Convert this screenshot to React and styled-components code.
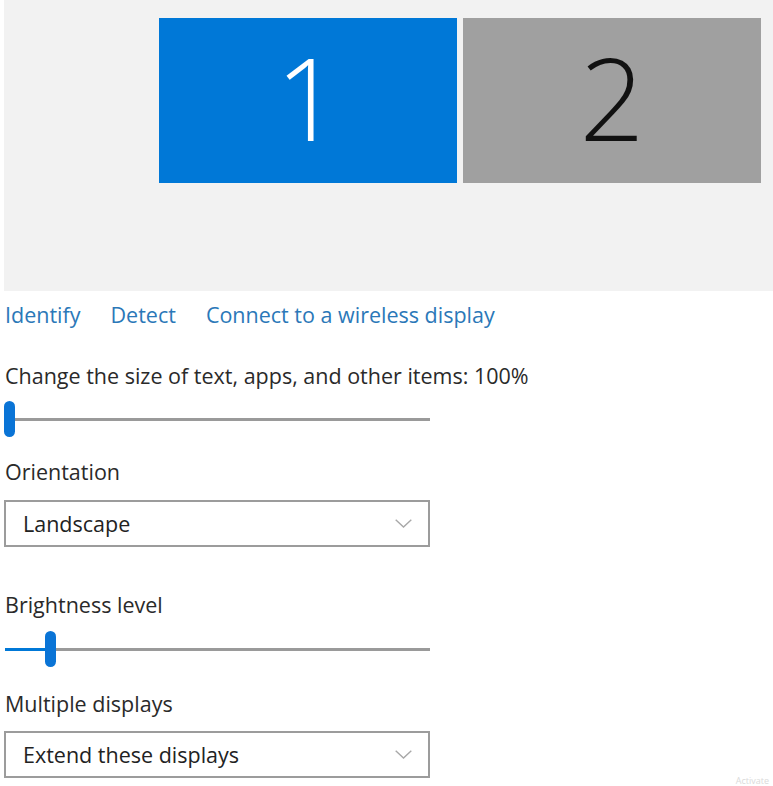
import React from 'react';
import styled, { createGlobalStyle } from 'styled-components';

const Global = createGlobalStyle`
  body {
    margin: 0;
    background: #ffffff;
    font-family: "Open Sans", "Noto Sans", sans-serif;
    color: #222;
  }
`;

const Page = styled.div`
  width: 773px;
  height: 786px;
  padding-left: 4px;
  box-sizing: border-box;
  overflow: hidden;
  position: relative;
`;

const Arrangement = styled.div`
  height: 291px;
  background: #f2f2f2;
  padding: 18px 8px 0 155px;
  box-sizing: border-box;
  display: flex;
  gap: 6px;
  align-items: flex-start;
`;

const Monitor = styled.div`
  width: 298px;
  height: 165px;
  background: ${p => (p.active ? '#0078d7' : '#a0a0a0')};
  color: ${p => (p.active ? '#ffffff' : '#111111')};
  display: flex;
  align-items: center;
  justify-content: center;
  font-family: "Open Sans", sans-serif;
  font-weight: 300;
  font-size: 114px;
  line-height: 1;
  padding-bottom: 8px;
  box-sizing: border-box;
`;

const Links = styled.div`
  display: flex;
  gap: 30px;
  margin-top: 9px;
  padding-left: 1px;
`;

const Link = styled.a`
  color: #2b78b8;
  font-size: 21.5px;
  line-height: 30px;
  cursor: pointer;
`;

const Label = styled.div`
  font-size: 21.5px;
  line-height: 30px;
  color: #2a2a2a;
  padding-left: 1px;
  margin-top: ${p => p.top}px;
`;

const Slider = styled.div`
  position: relative;
  width: 426px;
  height: 36px;
  margin-top: ${p => p.top}px;
`;

const Track = styled.div`
  position: absolute;
  left: 1px;
  right: 0;
  top: 17px;
  height: 3px;
  background: #9a9a9a;
`;

const Fill = styled.div`
  position: absolute;
  left: 1px;
  top: 17px;
  height: 3px;
  background: #0078d7;
`;

const Thumb = styled.div`
  position: absolute;
  top: 0;
  width: 11px;
  height: 36px;
  border-radius: 6px;
  background: #0a74d6;
`;

const Select = styled.div`
  width: 426px;
  height: 47px;
  border: 2px solid #9c9c9c;
  box-sizing: border-box;
  display: flex;
  align-items: center;
  justify-content: space-between;
  padding: 0 16px 0 17px;
  margin-top: ${p => p.top}px;
  font-size: 21.5px;
  color: #222;
`;

const Chevron = () => (
  <svg width="17" height="9" viewBox="0 0 17 9">
    <path d="M0.7 0.7 L8.5 8 L16.3 0.7" fill="none" stroke="#a8a8a8" strokeWidth="1.4" />
  </svg>
);

const Watermark = styled.div`
  position: absolute;
  right: 4px;
  bottom: 0;
  font-size: 9px;
  line-height: 10px;
  color: #dadada;
`;

function SizeSlider({ value, top }) {
  return (
    <Slider top={top}>
      <Track />
      <Fill style={{ width: value }} />
      <Thumb style={{ left: value }} />
    </Slider>
  );
}

export default function App() {
  return (
    <Page>
      <Global />
      <Arrangement>
        <Monitor active>1</Monitor>
        <Monitor>2</Monitor>
      </Arrangement>
      <Links>
        <Link>Identify</Link>
        <Link>Detect</Link>
        <Link>Connect to a wireless display</Link>
      </Links>
      <Label top={31}>Change the size of text, apps, and other items: 100%</Label>
      <SizeSlider value={0} top={10} />
      <Label top={20}>Orientation</Label>
      <Select top={13}>
        <span>Landscape</span>
        <Chevron />
      </Select>
      <Label top={43}>Brightness level</Label>
      <SizeSlider value={41} top={11} />
      <Label top={22}>Multiple displays</Label>
      <Select top={12}>
        <span>Extend these displays</span>
        <Chevron />
      </Select>
      <Watermark>Activate</Watermark>
    </Page>
  );
}
